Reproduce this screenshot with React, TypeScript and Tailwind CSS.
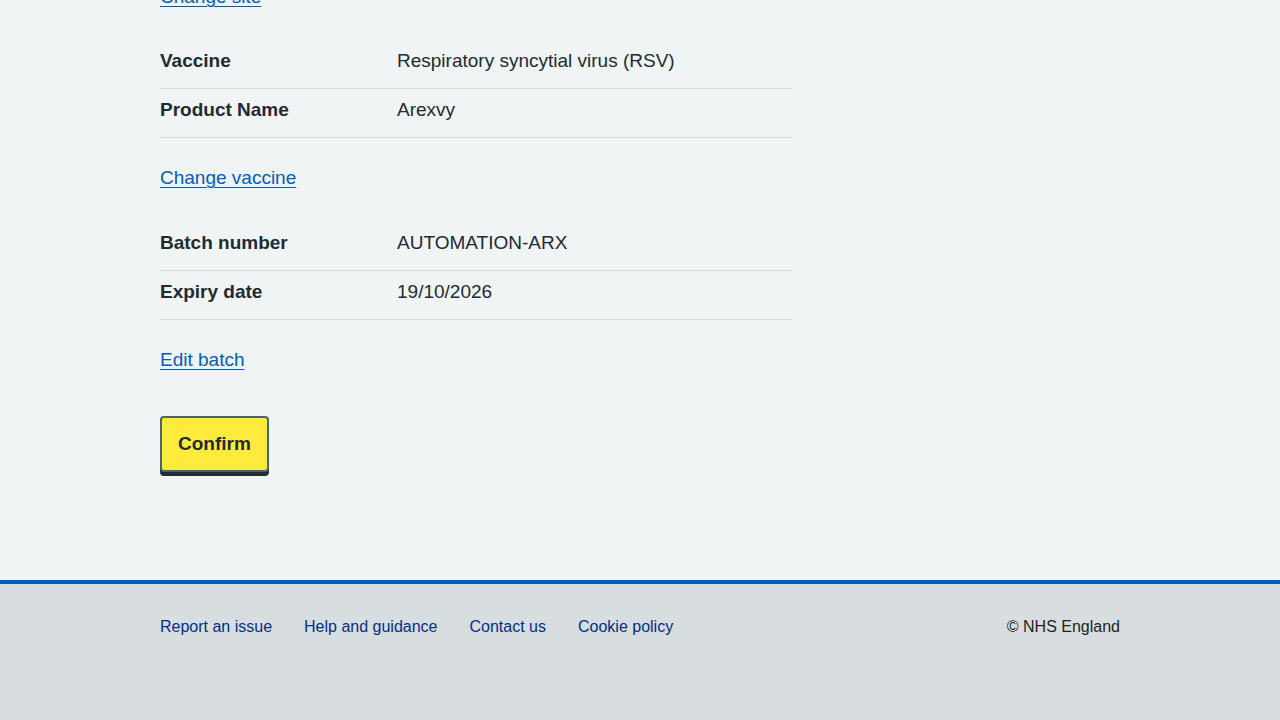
const rowsVaccine = [
  { key: "Vaccine", value: "Respiratory syncytial virus (RSV)" },
  { key: "Product Name", value: "Arexvy" },
];

const rowsBatch = [
  { key: "Batch number", value: "AUTOMATION-ARX" },
  { key: "Expiry date", value: "19/10/2026" },
];

const SummaryList = ({ rows }: { rows: { key: string; value: string }[] }) => (
  <dl className="w-[632px]">
    {rows.map((row) => (
      <div key={row.key} className="flex border-b border-[#d8dde0] pt-[7px] pb-[13px]">
        <dt className="w-[237px] font-bold leading-[28px]">{row.key}</dt>
        <dd className="leading-[28px]">{row.value}</dd>
      </div>
    ))}
  </dl>
);

const ActionLink = ({ children }: { children: string }) => (
  <p className="leading-[28px]">
    <a href="#" className="text-[#005eb8] underline underline-offset-[3px] decoration-1">
      {children}
    </a>
  </p>
);

const App = () => {
  return (
    <div className="bg-[#f0f4f5] text-[#212b32] text-[19px] font-['Liberation_Sans',Arial,sans-serif]">
      <main className="mx-auto w-[960px] pb-[108px]">
        <div className="-mt-[17px]">
          <ActionLink>Change site</ActionLink>
        </div>
        <div className="mt-[29px]">
          <SummaryList rows={rowsVaccine} />
        </div>
        <div className="mt-[26px]">
          <ActionLink>Change vaccine</ActionLink>
        </div>
        <div className="mt-[30px]">
          <SummaryList rows={rowsBatch} />
        </div>
        <div className="mt-[26px]">
          <ActionLink>Edit batch</ActionLink>
        </div>
        <button className="mt-[42px] h-[56px] px-4 rounded-[4px] border-2 border-[#4c6272] bg-[#ffeb3b] font-bold leading-[28px] shadow-[0_4px_0_#212b32]">
          Confirm
        </button>
      </main>
      <footer className="border-t-4 border-[#005eb8] bg-[#d8dde0] h-[140px]">
        <div className="mx-auto w-[960px] pt-[31px] flex justify-between text-[16px] leading-[24px]">
          <ul className="flex gap-8 text-[#003087]">
            <li><a href="#">Report an issue</a></li>
            <li><a href="#">Help and guidance</a></li>
            <li><a href="#">Contact us</a></li>
            <li><a href="#">Cookie policy</a></li>
          </ul>
          <p className="text-[#231f20]">© NHS England</p>
        </div>
      </footer>
    </div>
  );
};

export default App;
